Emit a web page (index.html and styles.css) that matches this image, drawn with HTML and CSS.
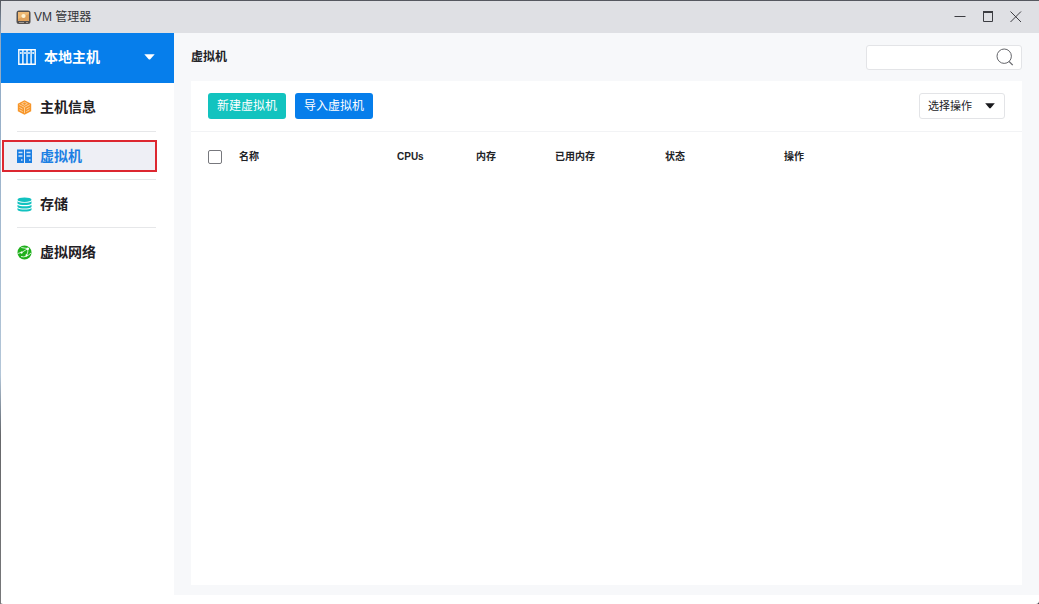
FILE: index.html
```html
<!DOCTYPE html>
<html lang="zh-CN">
<head>
<meta charset="utf-8">
<title>VM 管理器</title>
<link rel="stylesheet" href="styles.css">
</head>
<body>
<div class="window">
  <header class="titlebar">
    <svg class="app-icon" width="15" height="15" viewBox="0 0 15 15" aria-hidden="true">
      <rect x="0.5" y="0.5" width="14" height="13.5" rx="2.5" fill="#55504f"/>
      <rect x="2" y="2" width="11" height="9" fill="#e0a25c"/>
      <path d="M2 2h11v2l-11 5z" fill="#eeb873"/>
      <circle cx="7.5" cy="6" r="2.1" fill="#fff2d2"/>
      <path d="M3 12.5h5M10 12.5h2" stroke="#a39b93" stroke-width="1"/>
    </svg>
    <span class="app-name">VM 管理器</span>
    <div class="window-controls">
      <button class="control" type="button" aria-label="最小化"><svg width="12" height="12" viewBox="0 0 12 12"><path d="M0.5 5.5h11" stroke="#3c3d42" fill="none"/></svg></button>
      <button class="control" type="button" aria-label="最大化"><svg width="12" height="12" viewBox="0 0 12 12"><path d="M1.5 1v9.5h9V1" stroke="#3c3d42" fill="none"/><path d="M1 1h10" stroke="#3c3d42" stroke-width="2"/></svg></button>
      <button class="control" type="button" aria-label="关闭"><svg width="12" height="12" viewBox="0 0 12 12"><path d="M0.5 0.5l10.5 10.5M11 0.5l-10.5 10.5" stroke="#3c3d42" fill="none"/></svg></button>
    </div>
  </header>
  <div class="body">
    <aside class="sidebar">
      <button class="host" type="button">
        <svg width="18" height="16" viewBox="0 0 18 16" fill="none" stroke="#fff" aria-hidden="true">
          <path d="M0.8 0.8h16.4v14.4H0.8zM4.9 0.8v14.4M9 0.8v14.4M13.1 0.8v14.4" stroke-width="1.4"/>
          <path d="M2.9 3v2M7 3v2M11 3v2M15.1 3v2" stroke-width="1.4"/>
        </svg>
        <span class="host-name">本地主机</span>
        <svg width="11" height="6" viewBox="0 0 11 6" aria-hidden="true"><path d="M0.3 0.3h10.4L6.3 5.2q-.8.7-1.6 0z" fill="#fff"/></svg>
      </button>
      <ul class="nav">
        <li class="nav-item"><a class="nav-link" href="#host">
          <svg width="15" height="15" viewBox="0 0 15 15" aria-hidden="true">
            <path d="M7.5 0.2l6.7 3.6v7.4l-6.7 3.6L0.8 11.2V3.8z" fill="#f7962a"/>
            <path d="M2.2 4.6l5.3 2.8 5.3-2.8M7.5 7.6v5.6M2.4 7.4l3.3 1.8M2.4 9.8l3.3 1.8M12.6 7.4L9.3 9.2M12.6 9.8l-3.3 1.8M4.6 3.7l2.9-1.5 2.9 1.5-2.9 1.6z" fill="none" stroke="#ffdcb0" stroke-width="0.8"/>
          </svg>主机信息</a></li>
        <li class="nav-item"><a class="nav-link nav-link-active" href="#vm" aria-current="page">
          <svg width="15" height="15" viewBox="0 0 15 15" aria-hidden="true">
            <path d="M0 0.5h7v13.5H0zM8 0.5h7v13.5H8z" fill="#1c7fe3"/>
            <path d="M1.5 3.5h4M1.5 7h4M9.5 3.5h4M9.5 7h4" stroke="#d3e6fa" stroke-width="1.4"/>
            <path d="M4 11h1.5M12 11h1.5" stroke="#d3e6fa" stroke-width="1.4"/>
          </svg>虚拟机</a></li>
        <li class="nav-item"><a class="nav-link" href="#storage">
          <svg width="15" height="15" viewBox="0 0 15 15" aria-hidden="true">
            <ellipse cx="7.5" cy="2.7" rx="7" ry="2.3" fill="#12c2c0"/>
            <path d="M0.5 4.2c2 2 12 2 14 0v2.3c-2 2-12 2-14 0zM0.5 7.7c2 2 12 2 14 0v2.2c-2 2-12 2-14 0zM0.5 11c2 2 12 2 14 0v1.9c-2 2-12 2-14 0z" fill="#12c2c0"/>
          </svg>存储</a></li>
        <li class="nav-item"><a class="nav-link" href="#network">
          <svg width="15" height="15" viewBox="0 0 15 15" aria-hidden="true">
            <circle cx="7.5" cy="7.5" r="7" fill="#1fb01c"/>
            <path d="M0.8 8.5Q5 8 10.8 3.6M4.3 2.5Q7 3 10.8 3.6M4 11.5Q9 13 14 8M10.8 3.6Q11.5 7 9.5 10.5" fill="none" stroke="#e4f8e2" stroke-width="0.9"/>
            <circle cx="10.8" cy="3.8" r="1.3" fill="#fff"/><circle cx="4.6" cy="7.6" r="1.1" fill="#fff"/><circle cx="9.5" cy="10.3" r="1.1" fill="#fff"/>
          </svg>虚拟网络</a></li>
      </ul>
    </aside>
    <main class="main">
      <div class="page-head">
        <h1 class="page-title">虚拟机</h1>
        <div class="search">
          <input class="search-input" type="text" aria-label="搜索">
          <svg width="18" height="18" viewBox="0 0 18 18" fill="none" stroke="#65666b" aria-hidden="true"><circle cx="8.2" cy="8.2" r="7.2"/><path d="M13 13.4l3.7 3.7" stroke-width="1.3"/></svg>
        </div>
      </div>
      <section class="panel">
        <div class="toolbar">
          <button class="btn btn-create" type="button">新建虚拟机</button>
          <button class="btn btn-import" type="button">导入虚拟机</button>
          <div class="action">
            <select class="action-select" aria-label="选择操作"><option>选择操作</option></select>
            <svg class="action-arrow" width="10" height="6" viewBox="0 0 10 6" aria-hidden="true"><path d="M0.2 0.3h9.6L5.8 5q-.8.8-1.6 0z" fill="#18191c"/></svg>
          </div>
        </div>
        <table class="vm-table">
          <colgroup><col class="col-check"><col class="col-name"><col class="col-cpu"><col class="col-memory"><col class="col-used"><col class="col-status"><col></colgroup>
          <thead>
            <tr>
              <th class="cell-check"><input class="check" type="checkbox" aria-label="全选"></th>
              <th>名称</th><th>CPUs</th><th>内存</th><th>已用内存</th><th>状态</th><th>操作</th>
            </tr>
          </thead>
          <tbody></tbody>
        </table>
      </section>
    </main>
  </div>
</div>
</body>
</html>
```
FILE: styles.css
```css
* { box-sizing: border-box; }

body {
  margin: 0;
  background: #3a3b40;
  color: #222327;
  font-family: "Liberation Sans", "Noto Sans CJK SC", sans-serif;
  font-size: 12px;
}

button, input, select { font: inherit; color: inherit; }
button { border: 0; padding: 0; cursor: pointer; }
svg { display: block; flex: none; }

.window {
  display: flex;
  flex-direction: column;
  min-height: 100vh;
  padding-bottom: 9px;
  border: 1px solid #55575e;
  border-right: 0;
  border-bottom: 0;
  border-image: linear-gradient(#55575e 0, #8fa9c4 6%, #b3c6d8 62%, #77818c 69%, #66676a 72%, #77787a 100%) 1;
  border-image-width: 1px 0 0 1px;
  border-radius: 3px;
  background: #fff;
}

.titlebar {
  display: flex;
  align-items: center;
  height: 32px;
  padding: 0 17px 0 15px;
  background: #dfe0e4;
}
.app-name { margin-left: 3px; line-height: 20px; color: #34353a; }
.window-controls { display: flex; gap: 16px; margin-left: auto; }
.control { width: 12px; height: 12px; background: none; }

.body { display: flex; flex: 1; }

.sidebar { flex: none; width: 173px; background: #fff; }
.host {
  display: flex;
  align-items: center;
  width: 100%;
  height: 50px;
  padding: 0 19px 2px 17px;
  background: #067eeb;
  color: #fff;
}
.host-name { margin: 0 auto 0 8px; font-size: 14px; font-weight: 700; line-height: 20px; }

.nav { margin: 0; padding: 0 17px 0 1px; list-style: none; }
.nav-item { position: relative; padding: 8px 0; }
.nav-item + .nav-item { padding: 9px 0 7px; }
.nav-item + .nav-item::before {
  content: "";
  position: absolute;
  top: 0;
  left: 15px;
  right: 1px;
  height: 1px;
  background: #e6e7e9;
}
.nav-link {
  display: flex;
  align-items: center;
  gap: 8px;
  height: 32px;
  padding-left: 13px;
  border: 2px solid transparent;
  color: #1f2024;
  font-size: 14px;
  font-weight: 700;
  line-height: 20px;
  text-decoration: none;
}
.nav-link-active { border-color: #dd2730; background: #eeeff5; color: #1c7fe3; }

.main {
  display: flex;
  flex: 1;
  flex-direction: column;
  padding: 0 17px 10px;
  background: #f7f8fa;
}
.page-head { display: flex; align-items: center; justify-content: space-between; height: 48px; }
.page-title { margin: 0; font-size: 12px; font-weight: 700; line-height: 20px; }
.search {
  display: flex;
  align-items: center;
  width: 156px;
  height: 25px;
  padding-right: 7px;
  border: 1px solid #e3e4e7;
  border-radius: 3px;
  background: #fff;
}
.search-input { flex: 1; min-width: 0; height: 100%; padding: 0 8px; border: 0; background: none; }

.panel { flex: 1; background: #fff; }
.toolbar {
  display: flex;
  align-items: center;
  gap: 9px;
  height: 51px;
  padding: 0 17px;
  border-bottom: 1px solid #f2f3f5;
}
.btn { height: 26px; padding: 0 9px; border-radius: 3px; color: #fff; line-height: 20px; }
.btn-create { background: #12c3bf; }
.btn-import { background: #067eeb; }
.action { position: relative; width: 86px; height: 26px; margin-left: auto; font-size: 11px; }
.action-select {
  width: 100%;
  height: 100%;
  padding: 0 20px 0 8px;
  border: 1px solid #e3e4e7;
  border-radius: 3px;
  background: #fff;
  appearance: none;
}
.action-arrow { position: absolute; top: 10px; right: 10px; pointer-events: none; }

.vm-table { width: 100%; border-collapse: collapse; table-layout: fixed; }
.vm-table th { height: 50px; padding: 0; font-size: 10px; font-weight: 700; line-height: 16px; text-align: left; }
.vm-table .cell-check { padding-left: 17px; }
.col-check { width: 48px; }
.col-name { width: 158px; }
.col-cpu { width: 79px; }
.col-memory { width: 79px; }
.col-used { width: 110px; }
.col-status { width: 119px; }
.check {
  display: block;
  width: 14px;
  height: 14px;
  margin: 0;
  border: 1px solid #77787d;
  border-radius: 2px;
  background: #fff;
  appearance: none;
}
.check:checked { background: #067eeb; }
```
